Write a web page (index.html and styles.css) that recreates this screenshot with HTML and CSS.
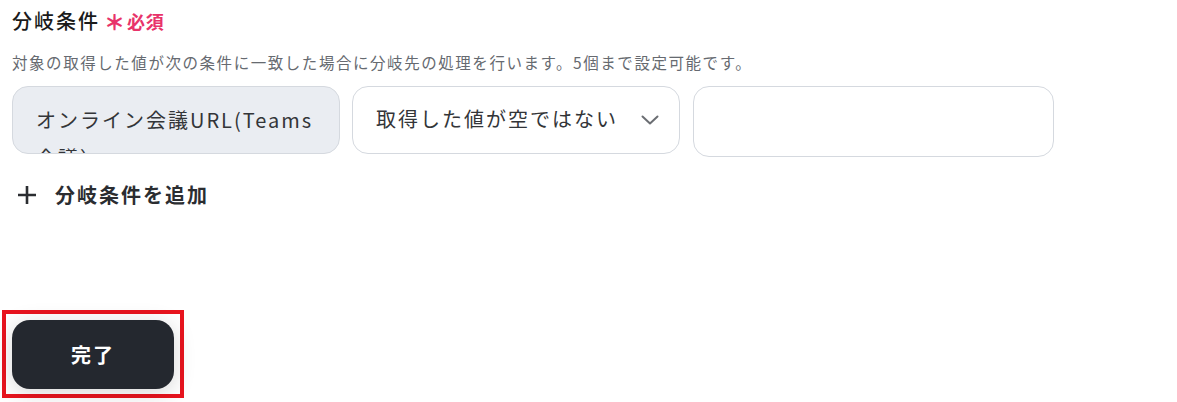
FILE: index.html
```html
<!DOCTYPE html>
<html lang="ja">
<head>
<meta charset="utf-8">
<link rel="stylesheet" href="styles.css">
</head>
<body>
<div class="page">
  <div class="title">分岐条件<span class="required"><span class="ast">＊</span>必須</span></div>
  <div class="desc">対象の取得した値が次の条件に一致した場合に分岐先の処理を行います。5個まで設定可能です。</div>
  <div class="row">
    <div class="field field-disabled">オンライン会議URL(Teams会議）</div>
    <div class="field field-select">
      <span class="select-text">取得した値が空ではない</span>
      <svg class="chev" width="18" height="10" viewBox="0 0 18 10"><path d="M1.5 1.5 L9 8.5 L16.5 1.5" fill="none" stroke="#6b6e73" stroke-width="2" stroke-linecap="round" stroke-linejoin="round"/></svg>
    </div>
    <div class="field field-input"></div>
  </div>
  <div class="add">
    <svg class="plus" width="18" height="18" viewBox="0 0 18 18"><path d="M9 1 V17 M1 9 H17" stroke="#2b2d31" stroke-width="2.6" stroke-linecap="square"/></svg>
    <span>分岐条件を追加</span>
  </div>
  <div class="mark">
    <button class="done">完了</button>
  </div>
</div>
</body>
</html>
```
FILE: styles.css
```css
html, body {
  margin: 0;
  padding: 0;
  background: #ffffff;
}
body {
  font-family: "Noto Sans CJK JP", "Noto Sans", sans-serif;
  color: #1d1d1f;
}
.page {
  padding-left: 12px;
  width: 1165px;
  height: 402px;
  overflow: hidden;
}
.title {
  margin-top: 7px;
  font-size: 20px;
  line-height: 28px;
  font-weight: 500;
  letter-spacing: 0.1em;
  color: #1a1a1a;
  display: flex;
  align-items: center;
}
.required {
  margin-left: 4px;
  font-size: 18px;
  color: #e8336a;
  font-weight: 700;
  letter-spacing: 0.05em;
  display: flex;
  align-items: center;
}
.ast {
  font-size: 21px;
  font-weight: 900;
  margin-right: 1px;
}
.desc {
  margin-top: 15px;
  font-size: 15.5px;
  line-height: 24px;
  letter-spacing: 0.1em;
  color: #666a70;
}
.row {
  margin-top: 12px;
  display: flex;
  align-items: flex-start;
  gap: 12px;
}
.field {
  box-sizing: border-box;
  height: 68px;
  border: 1px solid #d5d9df;
  border-radius: 16px;
  font-size: 20px;
  letter-spacing: 0.1em;
  color: #333538;
}
.field-disabled {
  width: 328px;
  background: #eaedf2;
  padding: 14px 16px 0 23px;
  line-height: 38px;
  overflow: hidden;
}
.field-select {
  width: 328px;
  background: #ffffff;
  padding: 0 20px 0 23px;
  display: flex;
  align-items: center;
  justify-content: space-between;
  line-height: 28px;
}
.select-text {
  margin-top: -2px;
}
.chev {
  display: block;
  margin-top: -1px;
}
.field-input {
  width: 361px;
  height: 71px;
  margin-left: 1px;
  background: #ffffff;
}
.add {
  margin-top: 24px;
  display: flex;
  align-items: center;
  gap: 19px;
  padding-left: 6px;
  font-size: 20px;
  line-height: 28px;
  font-weight: 700;
  letter-spacing: 0.1em;
  color: #2b2d31;
}
.plus {
  display: block;
}
.mark {
  margin-top: 101px;
  margin-left: -10px;
  display: inline-block;
  border: 4px solid #e8141e;
  padding: 6px 6px 5px 6px;
}
.done {
  display: block;
  width: 162px;
  height: 69px;
  border: none;
  border-radius: 18px;
  background: #24282f;
  color: #ffffff;
  font-family: "Noto Sans CJK JP", "Noto Sans", sans-serif;
  font-size: 20px;
  font-weight: 700;
  letter-spacing: 0.1em;
  box-shadow: 0 4px 22px rgba(0, 0, 0, 0.16);
  padding: 0;
}
```
